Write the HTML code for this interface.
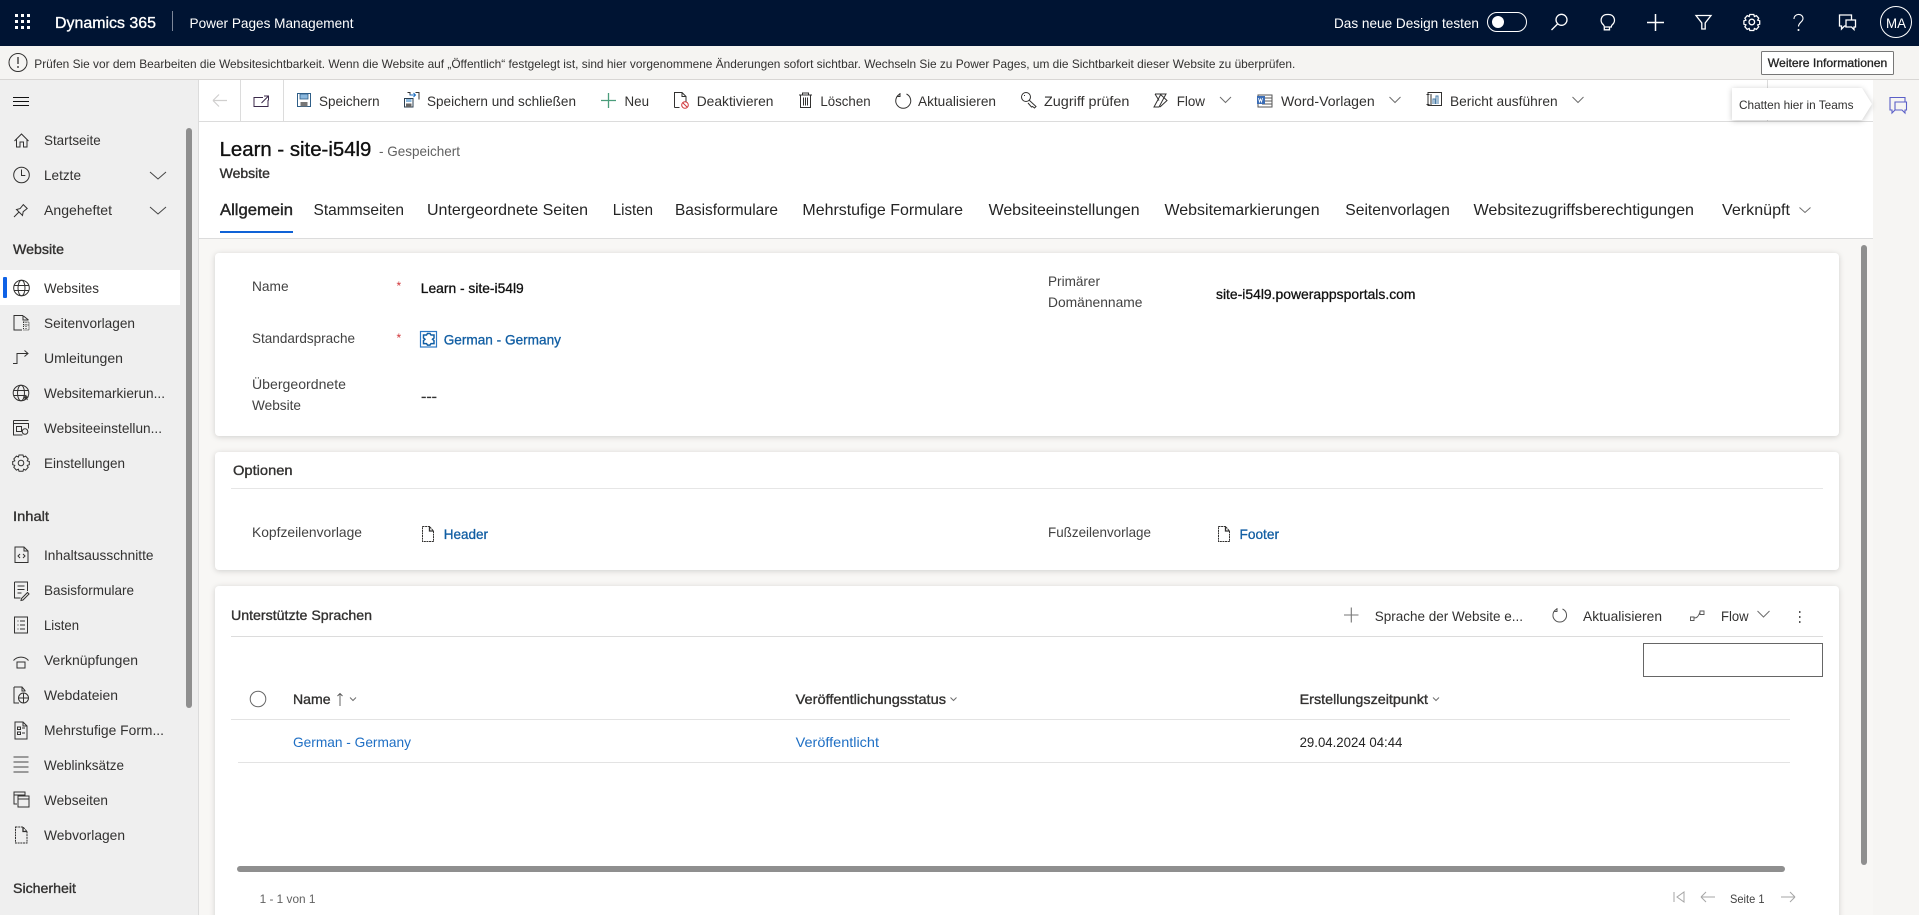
<!DOCTYPE html>
<html lang="de"><head><meta charset="utf-8"><title>Power Pages Management</title>
<style>
html,body{margin:0;padding:0;width:1919px;height:915px;overflow:hidden;background:#f8f7f5}
svg{display:block;font-family:"Liberation Sans",sans-serif}
text{font-size:14px;fill:#323130;white-space:pre}
.w{fill:#fff}
.s12{font-size:12px}
.tab{font-size:16px;fill:#242424}
.lbl{fill:#424242}
.blk{fill:#111;stroke:#111;stroke-width:.3px}
.lnk{fill:#115ea3;stroke:#115ea3;stroke-width:.3px}
.hd{fill:#323130;stroke:#323130;stroke-width:.35px}
.grid{fill:#1f6fc4}
.ic{fill:none;stroke:#323130;stroke-width:1}
.icw{fill:none;stroke:#fff;stroke-width:1.3}
.chev{fill:none;stroke:#6e6e6e;stroke-width:1}
</style></head><body>
<svg width="1919" height="915" viewBox="0 0 1919 915" xmlns="http://www.w3.org/2000/svg">
<rect width="1919" height="915" fill="#f8f7f5"/>

<!-- Top bar -->
<rect width="1919" height="46" fill="#001433"/>
<g fill="#fff"><rect x="15" y="14" width="3" height="3"/><rect x="21" y="14" width="3" height="3"/><rect x="27" y="14" width="3" height="3"/><rect x="15" y="20" width="3" height="3"/><rect x="21" y="20" width="3" height="3"/><rect x="27" y="20" width="3" height="3"/><rect x="15" y="26" width="3" height="3"/><rect x="21" y="26" width="3" height="3"/><rect x="27" y="26" width="3" height="3"/></g>
<text class="w" x="55" y="28" style="font-size:16px;stroke:#fff;stroke-width:.35px" textLength="101" lengthAdjust="spacingAndGlyphs">Dynamics 365</text>
<rect x="172" y="11" width="1" height="20" fill="#7d8799"/>
<text class="w" x="189.500" y="28" textLength="164" lengthAdjust="spacingAndGlyphs">Power Pages Management</text>
<text class="w" x="1334" y="28" textLength="145" lengthAdjust="spacingAndGlyphs">Das neue Design testen</text>
<rect x="1487.500" y="12.500" width="39" height="19" rx="9.500" fill="none" stroke="#fff" stroke-width="1"/>
<circle cx="1498" cy="22" r="6" fill="#fff"/>
<g class="icw">
<circle cx="1561.500" cy="19.800" r="5.500"/><path d="M1557.500 24L1551.500 30"/>
<path d="M1606.800 14.500a5.700 5.700 0 0 0-3.500 10.200c.7.700 1 1.500 1 2.300h7c0-.8.300-1.600 1-2.300a5.700 5.700 0 0 0-3.500-10.200zM1604.300 27v2.800h5.200V27" transform="translate(0,0)"/>
<path d="M1647 22.500h17M1655.500 14v17" stroke-width="1.500"/>
<path d="M1696 15.500h15l-5.800 7.500v6h-3.400v-6z"/>
<circle cx="1751.800" cy="22" r="2.800"/>
<path d="M1749.800 14.500h4l.6 2 2-.8 2.300 2.500-1 1.900 2 .7v3.400l-2 .7 1 1.900-2.300 2.500-2-.8-.6 2h-4l-.6-2-2 .8-2.300-2.500 1-1.900-2-.7v-3.400l2-.7-1-1.900 2.300-2.500 2 .8z"/>
<path d="M1794 19c0-6 9-6 9-.5 0 3.500-4.500 4-4.500 8" stroke-width="1.100"/>
</g>
<circle cx="1798.500" cy="30" r="1" fill="#fff"/>
<path d="M1851.500 19.500V15H1839.500V26h2v3l3-3h1" fill="none" stroke="#fff" stroke-width="1.300"/>
<path d="M1846 20h9.500v7h-1.500v2.500l-2.500-2.500H1846z" fill="none" stroke="#fff" stroke-width="1.300"/>
<circle cx="1896" cy="22" r="15.500" fill="none" stroke="#fff" stroke-width="1"/>
<text class="w" x="1886" y="28" textLength="20" lengthAdjust="spacingAndGlyphs">MA</text>

<!-- Notification bar -->
<rect y="46" width="1919" height="33" fill="#f5f4f2"/>
<rect y="79" width="1919" height="1" fill="#d8d6d4"/>
<circle cx="18" cy="62.500" r="9" fill="none" stroke="#323130" stroke-width="1"/>
<path d="M18 57v7M18 66v2" stroke="#323130" stroke-width="1.300" fill="none"/>
<text class="s12" x="34.300" y="68" textLength="1261" lengthAdjust="spacingAndGlyphs">Prüfen Sie vor dem Bearbeiten die Websitesichtbarkeit. Wenn die Website auf „Öffentlich“ festgelegt ist, sind hier vorgenommene Änderungen sofort sichtbar. Wechseln Sie zu Power Pages, um die Sichtbarkeit dieser Website zu überprüfen.</text>
<rect x="1761.500" y="51.500" width="132" height="23" rx="1" fill="#fff" stroke="#777" stroke-width="1"/>
<text class="s12" x="1767.800" y="67" style="fill:#242424;stroke:#242424;stroke-width:.3px" textLength="119.500" lengthAdjust="spacingAndGlyphs">Weitere Informationen</text>

<!-- Left nav -->
<rect y="80" width="198" height="835" fill="#efefef"/>
<rect x="198" y="80" width="1" height="835" fill="#dcdcdc"/>
<rect x="186" y="128" width="6" height="580" rx="3" fill="#8f8f8f"/>
<rect y="270" width="180" height="35" fill="#fff"/>
<rect x="3" y="277" width="4" height="21" rx="1" fill="#0f62e6"/>
<path d="M13 97.500h16M13 101.500h16M13 105.500h16" stroke="#111" stroke-width="1"/>

<g class="ic">
<path d="M14.500 141l7-7 7 7M16.500 139.500V147h3.500v-5h3.500v5H27v-7.500"/>
<circle cx="21.500" cy="175" r="7.800"/><path d="M21.500 169.500v6h3.800"/>
<path d="M14 217l5-5M16.500 209.500l6 6 .7-3.800 4-3.200-3.900-3.900-3.200 4z"/>
<circle cx="21.500" cy="288" r="7.800"/><ellipse cx="21.500" cy="288" rx="3.500" ry="7.800"/><path d="M14 285.500h15M14 290.500h15"/>
<path d="M23 315.500H14v14.500h8M23 315.500v4.500h5.500M23.500 316l5 4"/>
<path d="M23.500 322h5.500v8h-5.500zM23.500 325h5.500M26 322v8" stroke-dasharray="1 1"/>
<path d="M13 363.500h4v-10h10.500M24.500 350.500l3.500 3-3.500 3"/>
<circle cx="21" cy="393" r="7.800"/><ellipse cx="21" cy="393" rx="3.500" ry="7.800"/><path d="M13.500 390.500h15M13.500 395.500h12"/>
<path d="M13.500 420.500h15M13.500 423.500h15v5M13.500 420.500v14.500h9M16.500 426.500h5v5h-5z"/>
<circle cx="25" cy="431.500" r="2.800"/>
<circle cx="21" cy="463" r="2.800"/><path d="M19 455h4l.6 2 2-.9 2.600 2.800-1 1.900 2.100.7v3.200l-2.100.7 1 1.900-2.600 2.800-2-.9-.6 2h-4l-.6-2-2 .9-2.600-2.800 1-1.900-2.100-.7v-3.200l2.100-.7-1-1.900 2.600-2.800 2 .9z"/>
<path d="M15 547h9l4 4v11.500H15zM24 547v4h4M20 554l-2 2 2 2M23 554l2 2-2 2"/>
<path d="M14.500 582h13v9M14.500 582v16h6M17.500 586h7M17.500 589.500h7M17.500 593h4M21.500 598.500l6-6 1.500 1.500-6 6-2 .5z"/>
<path d="M14.500 617h13v16h-13zM17.500 621h1M20 621h5M17.500 625h1M20 625h5M17.500 629h1M20 629h5"/>
<path d="M13.500 660.500c4-4.500 11-4.500 15 0M17 662h8v6h-8z"/>
<path d="M14 687h8l3 3.500v1M14 687v16h5M22 687v4h3"/>
<circle cx="23.500" cy="698" r="5"/><path d="M18.500 698h10M23.500 693v10"/>
<path d="M15 722h8l4 4v13H15zM23 722v4h4M17.500 727h3v2.500h-3zM17.500 732h3v2.500h-3zM22 728h3M22 733h3"/>
<path d="M13.500 757h15M13.500 762h15M13.500 767h15M13.500 772h15" stroke="#444"/>
<path d="M14 792h11v3h-11zM14 795v9h3M18 796h11v11H18zM18 799h11"/>
<path d="M15.500 827h7.500l4 4.500V843H15.500z" stroke-dasharray="2 .7"/><path d="M23 827v4.500h4" stroke-width="1.300"/>
</g>
<path d="M150 172l8 7 8-7M150 207l8 7 8-7" fill="none" stroke="#444" stroke-width="1"/>
<path d="M26 394.500l.9 2 2.200.2-1.700 1.400.5 2.200-1.900-1.200-1.900 1.200.5-2.200-1.700-1.400 2.200-.2z" fill="#323130"/>

<text x="44" y="145" textLength="56.700" lengthAdjust="spacingAndGlyphs">Startseite</text>
<text x="44" y="180" textLength="37" lengthAdjust="spacingAndGlyphs">Letzte</text>
<text x="44" y="215" textLength="68" lengthAdjust="spacingAndGlyphs">Angeheftet</text>
<text class="hd" x="13" y="254" textLength="51" lengthAdjust="spacingAndGlyphs">Website</text>
<text x="44" y="293" textLength="55" lengthAdjust="spacingAndGlyphs">Websites</text>
<text x="44" y="328" textLength="91" lengthAdjust="spacingAndGlyphs">Seitenvorlagen</text>
<text x="44" y="363" textLength="79" lengthAdjust="spacingAndGlyphs">Umleitungen</text>
<text x="44" y="398" textLength="121" lengthAdjust="spacingAndGlyphs">Websitemarkierun...</text>
<text x="44" y="433" textLength="118" lengthAdjust="spacingAndGlyphs">Websiteeinstellun...</text>
<text x="44" y="468" textLength="81" lengthAdjust="spacingAndGlyphs">Einstellungen</text>
<text class="hd" x="13" y="521" textLength="36" lengthAdjust="spacingAndGlyphs">Inhalt</text>
<text x="44" y="560" textLength="109.500" lengthAdjust="spacingAndGlyphs">Inhaltsausschnitte</text>
<text x="44" y="595" textLength="90" lengthAdjust="spacingAndGlyphs">Basisformulare</text>
<text x="44" y="630" textLength="35" lengthAdjust="spacingAndGlyphs">Listen</text>
<text x="44" y="665" textLength="94" lengthAdjust="spacingAndGlyphs">Verknüpfungen</text>
<text x="44" y="700" textLength="74" lengthAdjust="spacingAndGlyphs">Webdateien</text>
<text x="44" y="735" textLength="120" lengthAdjust="spacingAndGlyphs">Mehrstufige Form...</text>
<text x="44" y="770" textLength="80" lengthAdjust="spacingAndGlyphs">Weblinksätze</text>
<text x="44" y="805" textLength="64" lengthAdjust="spacingAndGlyphs">Webseiten</text>
<text x="44" y="840" textLength="81" lengthAdjust="spacingAndGlyphs">Webvorlagen</text>
<text class="hd" x="13" y="893" textLength="63" lengthAdjust="spacingAndGlyphs">Sicherheit</text>

<!-- Main header -->
<rect x="199" y="80" width="1674" height="158" fill="#fff"/>
<rect x="199" y="121" width="1674" height="1" fill="#dcdcdc"/>
<rect x="199" y="238" width="1674" height="1" fill="#dcdcdc"/>
<rect x="240" y="80" width="1" height="41" fill="#dcdcdc"/>
<rect x="283" y="80" width="1" height="41" fill="#dcdcdc"/>
<rect x="1767" y="80" width="1" height="41" fill="#dcdcdc"/>

<!-- Right rail -->
<rect x="1873" y="80" width="46" height="835" fill="#f6f5f3"/>
<path d="M1905 101.500V97.500H1890V110h2v3l3-3" fill="none" stroke="#5b5fc7" stroke-width="1.100"/>
<path d="M1895 102h11.500v8h-1.500v3l-3-3h-7z" fill="none" stroke="#5b5fc7" stroke-width="1.100"/>

<!-- Command bar icons -->
<path d="M213 100.500h14M213 100.500l6-6M213 100.500l6 6" stroke="#d0cfce" stroke-width="1.200" fill="none"/>
<path d="M268 100v6.500h-14v-9h9M261.500 103l6.500-6.500M264 96h4.500v4.500" fill="none" stroke="#3b2a4a" stroke-width="1"/>

<rect x="297.500" y="93.500" width="13" height="13" fill="#fff" stroke="#2f5f88" stroke-width="1"/>
<rect x="300" y="94" width="8" height="5" fill="#8bb8de" stroke="#2f5f88" stroke-width=".8"/>
<rect x="300.500" y="102" width="7" height="4.500" fill="#777"/>
<rect x="404.500" y="98.500" width="8.500" height="8.500" fill="#fff" stroke="#2b3f50" stroke-width="1"/>
<rect x="406" y="99" width="5.500" height="3" fill="#8bb8de"/>
<rect x="406" y="103.500" width="5.500" height="3.500" fill="#666"/>
<path d="M410 95v-2.500h-2.500M415.500 92.500h3.500v7" fill="none" stroke="#333" stroke-width="1"/>
<path d="M409.500 95h5.500M413.500 93l2 2-2 2" fill="none" stroke="#1b6ec2" stroke-width="1"/>

<path d="M601 100.500h15M608.500 93v15" stroke="#4a9d7b" stroke-width="1.300" fill="none"/>
<g class="ic">
<path d="M674.500 107.500v-15h7.500l4 4v5M682 92.500v4h4M674.500 107.500h5"/>
<circle cx="685" cy="105" r="3.300" stroke="#d13438"/><path d="M683 103l4 4" stroke="#d13438"/>
<path d="M799 95h13M802.500 95v-2h6v2M800.500 95v12.500h10V95M803.500 97.500v8M805.500 97.500v8M807.500 97.500v8"/>
<path d="M900 94a7.500 7.500 0 1 0 6.500 0M900 93v3.500h-3"/>
<circle cx="1026" cy="97" r="4.500"/><path d="M1029 100l7 6.500-1.500 1.500-2-1.500-1 .5-3.500-4M1024 95.500h1"/>
<path d="M1155 94h11l-7 13h-5l7-13M1160 94l7 6.500-7 6.500M1155 94l4 6.500"/>
<path d="M1258 95h14v12h-14zM1262 98h10M1262 101h10M1262 104h10" stroke="#555"/>
</g>
<rect x="1257" y="96" width="8" height="8" fill="#3a6cb5"/>
<path d="M1258.500 98l1 4 1-3 1 3 1-4" stroke="#fff" stroke-width=".8" fill="none"/>
<g class="ic">
<path d="M1428 92.500h13.500v13h-13.500zM1431 94v11M1426.500 94.500h3M1426.500 104.500h3"/>
<path d="M1433 104v-5h2v5M1436 104v-8h2v8" stroke="#4a7da8"/>
</g>
<path class="chev" d="M1220 97l5.500 5.500 5.500-5.500M1389.500 97l5.500 5.500 5.500-5.500M1572.500 97l5.500 5.500 5.500-5.500"/>

<text x="319" y="106" textLength="60.600" lengthAdjust="spacingAndGlyphs">Speichern</text>
<text x="427" y="106" textLength="149" lengthAdjust="spacingAndGlyphs">Speichern und schließen</text>
<text x="624.500" y="106" textLength="24.500" lengthAdjust="spacingAndGlyphs">Neu</text>
<text x="696.700" y="106" textLength="76.800" lengthAdjust="spacingAndGlyphs">Deaktivieren</text>
<text x="820.400" y="106" textLength="50.200" lengthAdjust="spacingAndGlyphs">Löschen</text>
<text x="918" y="106" textLength="78" lengthAdjust="spacingAndGlyphs">Aktualisieren</text>
<text x="1044" y="106" textLength="85.400" lengthAdjust="spacingAndGlyphs">Zugriff prüfen</text>
<text x="1176.700" y="106" textLength="28.300" lengthAdjust="spacingAndGlyphs">Flow</text>
<text x="1281" y="106" textLength="93.700" lengthAdjust="spacingAndGlyphs">Word-Vorlagen</text>
<text x="1450" y="106" textLength="107.600" lengthAdjust="spacingAndGlyphs">Bericht ausführen</text>

<!-- Tooltip -->
<g style="filter:drop-shadow(0 1px 3px rgba(0,0,0,.22))">
<path d="M1732 88h130l10 16-10 16h-130z" fill="#fff"/>
</g>
<text class="s12" x="1739" y="109" textLength="114.500" lengthAdjust="spacingAndGlyphs">Chatten hier in Teams</text>

<!-- Title -->
<text x="219.600" y="156" style="font-size:20px;fill:#111;stroke:#111;stroke-width:.35px" textLength="151.800" lengthAdjust="spacingAndGlyphs">Learn - site-i54l9</text>
<text x="379" y="156" style="fill:#616161" textLength="81" lengthAdjust="spacingAndGlyphs">- Gespeichert</text>
<text x="219.600" y="178" class="hd" style="font-size:13.500px" textLength="50.400" lengthAdjust="spacingAndGlyphs">Website</text>

<!-- Tabs -->
<text class="tab" x="220" y="215" style="stroke:#242424;stroke-width:.4px" textLength="73" lengthAdjust="spacingAndGlyphs">Allgemein</text>
<rect x="220" y="231" width="73" height="2" fill="#0f62d6"/>
<text class="tab" x="313.500" y="215" textLength="90.500" lengthAdjust="spacingAndGlyphs">Stammseiten</text>
<text class="tab" x="427" y="215" textLength="161" lengthAdjust="spacingAndGlyphs">Untergeordnete Seiten</text>
<text class="tab" x="612.700" y="215" textLength="40.300" lengthAdjust="spacingAndGlyphs">Listen</text>
<text class="tab" x="675" y="215" textLength="103" lengthAdjust="spacingAndGlyphs">Basisformulare</text>
<text class="tab" x="802.400" y="215" textLength="160.600" lengthAdjust="spacingAndGlyphs">Mehrstufige Formulare</text>
<text class="tab" x="988.600" y="215" textLength="151" lengthAdjust="spacingAndGlyphs">Websiteeinstellungen</text>
<text class="tab" x="1164.500" y="215" textLength="155.100" lengthAdjust="spacingAndGlyphs">Websitemarkierungen</text>
<text class="tab" x="1345.300" y="215" textLength="104.500" lengthAdjust="spacingAndGlyphs">Seitenvorlagen</text>
<text class="tab" x="1473.500" y="215" textLength="220.500" lengthAdjust="spacingAndGlyphs">Websitezugriffsberechtigungen</text>
<text class="tab" x="1722" y="215" textLength="68" lengthAdjust="spacingAndGlyphs">Verknüpft</text>
<path class="chev" d="M1799.500 207.500l5.500 5 5.500-5"/>

<!-- Page scrollbar -->
<rect x="1861" y="245" width="6" height="620" rx="3" fill="#8f8f8f"/>

<!-- Cards -->
<g style="filter:drop-shadow(0 1.500px 3px rgba(0,0,0,.16))">
<rect x="215" y="253" width="1624" height="183" rx="4" fill="#fff"/>
<rect x="215" y="452" width="1624" height="118" rx="4" fill="#fff"/>
<rect x="215" y="586" width="1624" height="340" rx="4" fill="#fff"/>
</g>

<text class="lbl" x="252" y="291" textLength="36.600" lengthAdjust="spacingAndGlyphs">Name</text>
<text x="396.500" y="290" style="fill:#d13438;font-size:12px">*</text>
<text class="blk" x="420.800" y="293" textLength="102.900" lengthAdjust="spacingAndGlyphs">Learn - site-i54l9</text>
<text class="lbl" x="1048" y="286" textLength="52" lengthAdjust="spacingAndGlyphs">Primärer</text>
<text class="lbl" x="1048" y="307" textLength="94.500" lengthAdjust="spacingAndGlyphs">Domänenname</text>
<text class="blk" x="1216" y="299" textLength="199.500" lengthAdjust="spacingAndGlyphs">site-i54l9.powerappsportals.com</text>
<text class="lbl" x="252" y="343" textLength="103" lengthAdjust="spacingAndGlyphs">Standardsprache</text>
<text x="396.500" y="342" style="fill:#d13438;font-size:12px">*</text>
<rect x="420.500" y="331.500" width="16" height="15.500" fill="none" stroke="#2b78c5" stroke-width="1.200"/>
<path d="M423.500 335h3l1-1.500h2.500l1 1.500h3v3l-1.500 1.300 1.500 1.300v3h-3l-1 1.500h-2.500l-1-1.500h-3v-3l1.500-1.300-1.500-1.300z" fill="none" stroke="#115ea3" stroke-width="1.500"/>
<text class="lnk" x="443.700" y="344.500" textLength="117.300" lengthAdjust="spacingAndGlyphs">German - Germany</text>
<text class="lbl" x="252" y="389" textLength="94" lengthAdjust="spacingAndGlyphs">Übergeordnete</text>
<text class="lbl" x="252" y="410" textLength="49" lengthAdjust="spacingAndGlyphs">Website</text>
<text x="421" y="401" style="fill:#333;stroke:#333;stroke-width:.3px" textLength="16" lengthAdjust="spacingAndGlyphs">---</text>

<text class="hd" x="233" y="475" textLength="59.600" lengthAdjust="spacingAndGlyphs">Optionen</text>
<rect x="231" y="488" width="1592" height="1" fill="#e6e6e6"/>
<text class="lbl" x="252" y="537" textLength="110" lengthAdjust="spacingAndGlyphs">Kopfzeilenvorlage</text>
<g class="ic">
<path d="M422.500 526.500h7l4 4.500v10.500h-11z" stroke-dasharray="2 .6"/><path d="M429.500 526.500v4.500h4" stroke-width="1.300"/>
<path d="M1218.500 526.500h7l4 4.500v10.500h-11z" stroke-dasharray="2 .6"/><path d="M1225.500 526.500v4.500h4" stroke-width="1.300"/>
</g>
<text class="lnk" x="443.700" y="539" textLength="44.300" lengthAdjust="spacingAndGlyphs">Header</text>
<text class="lbl" x="1048" y="537" textLength="103" lengthAdjust="spacingAndGlyphs">Fußzeilenvorlage</text>
<text class="lnk" x="1239.500" y="539" textLength="39.500" lengthAdjust="spacingAndGlyphs">Footer</text>

<!-- Subgrid -->
<text class="hd" x="231" y="620" textLength="141" lengthAdjust="spacingAndGlyphs">Unterstützte Sprachen</text>
<rect x="231" y="636" width="1592" height="1" fill="#dcdcdc"/>
<path d="M1344 615h14.500M1351.300 607.500v15" stroke="#767676" stroke-width="1.100" fill="none"/>
<text x="1374.700" y="621" textLength="148.300" lengthAdjust="spacingAndGlyphs">Sprache der Website e...</text>
<path d="M1557 609a6.800 6.800 0 1 0 5.500 0M1557 608v3.500h-3" fill="none" stroke="#555" stroke-width="1"/>
<text x="1583" y="621" textLength="79" lengthAdjust="spacingAndGlyphs">Aktualisieren</text>
<path d="M1690.500 617h3.500v3.500h-3.500zM1700 611h4v3.500h-4zM1694 618c3 0 4-1 6-6" fill="none" stroke="#555" stroke-width=".9"/>
<text x="1721" y="621" textLength="27.600" lengthAdjust="spacingAndGlyphs">Flow</text>
<path class="chev" d="M1757.500 611l6 6 6-6"/>
<g fill="#555"><rect x="1799" y="611" width="1.500" height="2"/><rect x="1799" y="616" width="1.500" height="2"/><rect x="1799" y="621" width="1.500" height="2"/></g>
<rect x="1643.500" y="643.500" width="179" height="33" fill="#fff" stroke="#666" stroke-width="1"/>

<circle cx="258" cy="699" r="7.800" fill="#fff" stroke="#666" stroke-width="1"/>
<text class="hd" x="293" y="704" textLength="37.600" lengthAdjust="spacingAndGlyphs">Name</text>
<path d="M340 706v-12.500M337.500 696l2.500-2.500 2.500 2.500" fill="none" stroke="#555" stroke-width=".9"/>
<path class="chev" d="M350 697.500l3 3 3-3"/>
<text class="hd" x="795.600" y="704" textLength="150.400" lengthAdjust="spacingAndGlyphs">Veröffentlichungsstatus</text>
<path class="chev" d="M950.500 697.500l3 3 3-3M1433 697.500l3 3 3-3"/>
<text class="hd" x="1299.600" y="704" textLength="128.400" lengthAdjust="spacingAndGlyphs">Erstellungszeitpunkt</text>
<rect x="231" y="719" width="1559" height="1" fill="#e3e3e3"/>
<text class="grid" x="293" y="747" textLength="118" lengthAdjust="spacingAndGlyphs">German - Germany</text>
<text class="grid" x="795.600" y="747" textLength="83.400" lengthAdjust="spacingAndGlyphs">Veröffentlicht</text>
<text x="1299.600" y="747" style="fill:#242424" textLength="102.800" lengthAdjust="spacingAndGlyphs">29.04.2024 04:44</text>
<rect x="238" y="762" width="1552" height="1" fill="#e3e3e3"/>
<rect x="237" y="866" width="1548" height="6" rx="3" fill="#8f8f8f"/>
<text class="s12" x="259.600" y="903" style="fill:#616161" textLength="55.900" lengthAdjust="spacingAndGlyphs">1 - 1 von 1</text>
<g fill="none" stroke="#a6a6a6" stroke-width="1">
<path d="M1674 892v10M1684 892v10l-7-5z"/>
<path d="M1701 897h14M1701 897l5-5M1701 897l5 5"/>
<path d="M1781 897h14M1795 897l-5-5M1795 897l-5 5"/>
</g>
<text class="s12" x="1730" y="903" style="fill:#424242" textLength="34.500" lengthAdjust="spacingAndGlyphs">Seite 1</text>
</svg>
</body></html>
